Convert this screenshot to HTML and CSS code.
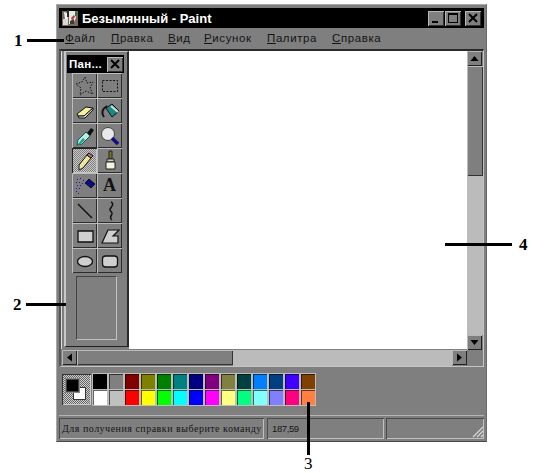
FILE: index.html
```html
<!DOCTYPE html>
<html lang="ru">
<head>
<meta charset="utf-8">
<title>Paint</title>
<link rel="stylesheet" href="styles.css">
</head>
<body>
<div class="stage">
  <div class="window">
    <div class="titlebar">
      <svg class="app-icon" viewBox="0 0 18 18"><path d="M1 2h16v15H1z" fill="#7a6a58"/><path d="M3 3l3 1 1 6H4z" fill="#f4f4f4"/><path d="M8 2h6l1 7-3 6H8z" fill="#e8e8e8"/><path d="M2 10h5v6H2z" fill="#d8d8d8"/><path d="M10 9l3-3 1 2-3 3z" fill="#c03030"/><path d="M9 12l4-2v5H9z" fill="#3a3a3a"/><path d="M6 1h2v7H6z" fill="#2a2a2a"/><path d="M14 3h2v4h-2z" fill="#2a7a3a"/></svg>
      <span class="title-text">Безымянный - Paint</span>
      <div class="caption-btns">
        <button class="cap"><svg viewBox="0 0 16 15"><path d="M4 10h6v2H4z" fill="#000"/></svg></button>
        <button class="cap"><svg viewBox="0 0 16 15"><path d="M3 2h10v10H3zM4 4v7h8V4z" fill="#000" fill-rule="evenodd"/></svg></button>
        <button class="cap cap-close"><svg viewBox="0 0 16 15"><path d="M4 3l8 8M12 3l-8 8" stroke="#000" stroke-width="2"/></svg></button>
      </div>
    </div>
    <nav class="menu">
      <span class="m1"><u>Ф</u>айл</span>
      <span class="m2"><u>П</u>равка</span>
      <span class="m3"><u>В</u>ид</span>
      <span class="m4"><u>Р</u>исунок</span>
      <span class="m5"><u>П</u>алитра</span>
      <span class="m6"><u>С</u>правка</span>
    </nav>
    <div class="client">
      <div class="work">
        <aside class="toolbox">
          <div class="tb-title"><span>Пан...</span><button class="tb-close"><svg viewBox="0 0 16 15"><path d="M4 3l8 8M12 3l-8 8" stroke="#000" stroke-width="2"/></svg></button></div>
          <div class="tools">
            <button class="tool"><svg viewBox="0 0 24 24"><path d="M12 3l2 6 6-1-3 6 3 6-7-3-6 4 1-7-5-4 6-2z" fill="none" stroke="#111" stroke-dasharray="1.5 1.5"/></svg></button>
            <button class="tool"><svg viewBox="0 0 24 24"><path d="M4.500 6.500h15v11h-15z" fill="none" stroke="#111" stroke-dasharray="2 1.500"/></svg></button>
            <button class="tool"><svg viewBox="0 0 24 24"><path d="M4 15l9-7 7 1-9 8H5z" fill="#f4f0a0" stroke="#111"/><path d="M5 17h6l9-8v2l-8 8H6z" fill="#ddd" stroke="#111"/></svg></button>
            <button class="tool"><svg viewBox="0 0 24 24"><path d="M8 9l6-4 7 7-7 6z" fill="#1a8a80" stroke="#111"/><path d="M6 18c-3-4-2-8 3-11" fill="none" stroke="#111" stroke-width="2"/><path d="M13 7l7 6" stroke="#ddd" stroke-width="2"/></svg></button>
            <button class="tool"><svg viewBox="0 0 24 24"><path d="M14 9l4-5 3 2-4 6z" fill="#111"/><path d="M13 8l4 4-8 8-5 1 1-5z" fill="#bfe8e0" stroke="#0a5a50"/><path d="M5 20l5-6 2 2-6 5z" fill="#14a090"/></svg></button>
            <button class="tool"><svg viewBox="0 0 24 24"><circle cx="10" cy="10" r="6.500" fill="#e8e8e8" stroke="#444"/><path d="M14 14l6 6" stroke="#101080" stroke-width="3.500"/></svg></button>
            <button class="tool tool-on"><svg viewBox="0 0 24 24"><path d="M14 6l4 3-8 10-4 2 0-5z" fill="#efe6a0" stroke="#111"/><path d="M14 6l2-2 4 3-2 2z" fill="#d06a80" stroke="#111"/></svg></button>
            <button class="tool"><svg viewBox="0 0 24 24"><path d="M11 2h3v8h-3z" fill="#7a7a20" stroke="#222"/><path d="M9 10h7v3H9z" fill="#ccc" stroke="#222"/><path d="M8 13h9v7H8z" fill="#f4f4e0" stroke="#222"/></svg></button>
            <button class="tool"><svg viewBox="0 0 24 24"><path d="M12 9l4-4 6 5-4 4z" fill="#0a0a90" stroke="#111"/><path d="M4 5h1v1H4zM7 4h1v1H7zM10 6h1v1h-1zM3 8h1v1H3zM6 8h1v1H6zM9 9h1v1H9zM4 11h1v1H4zM7 11h1v1H7zM3 14h1v1H3zM6 14h1v1H6zM3 17h1v1H3zM5 19h1v1H5z" fill="#1818b0"/></svg></button>
            <button class="tool tool-a">A</button>
            <button class="tool"><svg viewBox="0 0 24 24"><path d="M5 5l14 14" stroke="#111" stroke-width="1.500"/></svg></button>
            <button class="tool"><svg viewBox="0 0 24 24"><path d="M13 3c4 2 0 5-1 7s3 3 2 5-3 4 0 6" fill="none" stroke="#111" stroke-width="1.500"/></svg></button>
            <button class="tool"><svg viewBox="0 0 24 24"><path d="M5 7h15v11H5z" fill="#cfcfcf" stroke="#111" stroke-width="1.300"/></svg></button>
            <button class="tool"><svg viewBox="0 0 24 24"><path d="M10 6h11l-6 6h5v7H4z" fill="#cfcfcf" stroke="#111" stroke-width="1.200"/></svg></button>
            <button class="tool"><svg viewBox="0 0 24 24"><ellipse cx="12" cy="12.500" rx="7.500" ry="5" fill="#cfcfcf" stroke="#111" stroke-width="1.300"/></svg></button>
            <button class="tool"><svg viewBox="0 0 24 24"><rect x="4.500" y="7" width="15" height="11" rx="3" fill="#cfcfcf" stroke="#111" stroke-width="1.300"/></svg></button>
          </div>
          <div class="tool-options"></div>
        </aside>
        <main class="canvas"></main>
      </div>
      <div class="vscroll">
        <button class="sb"><svg viewBox="0 0 15 15"><path d="M3.500 10L7.500 5l4 5z" fill="#000"/></svg></button>
        <div class="v-thumb"></div>
        <div class="track"></div>
        <button class="sb"><svg viewBox="0 0 15 15"><path d="M3.500 5l4 5 4-5z" fill="#000"/></svg></button>
      </div>
      <div class="hscroll">
        <button class="sb"><svg viewBox="0 0 15 15"><path d="M10 3.500L5 7.500l5 4z" fill="#000"/></svg></button>
        <div class="h-thumb"></div>
        <div class="track"></div>
        <button class="sb"><svg viewBox="0 0 15 15"><path d="M5 3.500l5 4-5 4z" fill="#000"/></svg></button>
      </div>
      <div class="corner"></div>
    </div>
    <div class="palette">
      <div class="current"><i class="bg-col"></i><i class="fg-col"></i></div>
      <div class="swatches">
        <i style="background:#000"></i><i style="background:#808080"></i><i style="background:#800000"></i><i style="background:#808000"></i><i style="background:#008000"></i><i style="background:#008080"></i><i style="background:#000080"></i><i style="background:#800080"></i><i style="background:#808040"></i><i style="background:#004040"></i><i style="background:#0080ff"></i><i style="background:#004080"></i><i style="background:#4000ff"></i><i style="background:#804000"></i>
        <i style="background:#fff"></i><i style="background:#c0c0c0"></i><i style="background:#ff0000"></i><i style="background:#ffff00"></i><i style="background:#00ff00"></i><i style="background:#00ffff"></i><i style="background:#0000ff"></i><i style="background:#ff00ff"></i><i style="background:#ffff80"></i><i style="background:#00ff80"></i><i style="background:#80ffff"></i><i style="background:#8080ff"></i><i style="background:#ff0080"></i><i style="background:#ff8040"></i>
      </div>
    </div>
    <footer class="status">
      <div class="st st-msg">Для получения справки выберите команду</div>
      <div class="st st-pos">187,59</div>
      <div class="st st-size"><svg class="grip" viewBox="0 0 14 14"><path d="M13 3L3 13M13 7l-6 6M13 11l-2 2" stroke="#d8d8d8" stroke-width="1.200"/></svg></div>
    </footer>
  </div>

  <span class="num n1">1</span><i class="lead l1"></i>
  <span class="num n2">2</span><i class="lead l2"></i>
  <span class="num n3">3</span><i class="lead l3"></i>
  <span class="num n4">4</span><i class="lead l4"></i>
</div>
</body>
</html>
```

FILE: styles.css
```css
* { box-sizing: border-box; }
html, body { margin: 0; padding: 0; background: #fff; }
body { width: 547px; height: 473px; overflow: hidden; font-family: "Liberation Sans", Arial, sans-serif; }
button { margin: 0; padding: 0; border: 0; background: none; display: block; font: inherit; }
svg { display: block; }
i { display: block; }

.stage { position: relative; width: 547px; height: 473px; padding: 4px 0 0 56px; }

.window {
  width: 431px; height: 438px; background: #7f7f7f;
  border: 1px solid #a8a8a8; border-right-color: #6a6a6a; border-bottom-color: #4a4a4a;
  padding: 3px 2px 2px 2px;
  display: flex; flex-direction: column;
}

.titlebar { height: 20px; background: #000; display: flex; align-items: center; padding: 0 3px 0 2px; flex: none; }
.app-icon { width: 18px; height: 18px; flex: none; }
.title-text { color: #fff; font-weight: bold; font-size: 13px; letter-spacing: 0; margin-left: 3px; white-space: nowrap; }
.caption-btns { margin-left: auto; display: flex; gap: 1px; }
.cap { width: 16px; height: 15px; background: #7f7f7f; box-shadow: inset 1px 1px 0 #b8b8b8, inset -1px -1px 0 #333; }
.cap-close { margin-left: 3px; }

.menu { height: 20px; flex: none; position: relative; display: flex; align-items: center; font-size: 11.500px; color: #141414; letter-spacing: .6px; white-space: nowrap; padding-left: 6px; }
.menu .m1 { width: 46px; }
.menu .m2 { width: 57px; }
.menu .m3 { width: 36px; }
.menu .m4 { width: 63px; }
.menu .m5 { width: 65px; }

.client {
  flex: none; height: 318px; margin: 1px 0 0 0;
  display: grid; grid-template-columns: 406px 16px; grid-template-rows: 299px 16px;
  border-top: 2px solid #2a2a2a;
  border-bottom: 1px solid #c4c4c4; border-left: 2px solid #555; border-right: 1px solid #c4c4c4;
}
.work { display: flex; min-width: 0; height: 298px; grid-column: 1; grid-row: 1; padding-left: 2px; border-left: 1px solid #ddd; }

.toolbox {
  width: 65px; height: 296px; flex: none; background: #7f7f7f; padding: 3px 3px 0 1px;
  border: 1px solid #222; border-left: 2px solid #c8c8c8; border-top: 1px solid #c8c8c8; border-right: 2px solid #2a2a2a;
  display: flex; flex-direction: column;
}
.tb-title { height: 18px; background: #000; display: flex; align-items: center; justify-content: space-between; padding: 0 1px 0 2px; flex: none; }
.tb-title span { color: #fff; font-weight: bold; font-size: 11.500px; letter-spacing: .3px; }
.tb-close { width: 16px; height: 15px; background: #7f7f7f; box-shadow: inset 1px 1px 0 #b8b8b8, inset -1px -1px 0 #333; }

.tools { display: grid; grid-template-columns: 25px 25px; grid-auto-rows: 25px; margin: 0 0 0 5px; }
.tool { width: 25px; height: 25px; background: #7f7f7f; box-shadow: inset 1px 1px 0 #bdbdbd, inset -1px -1px 0 #2c2c2c; display: flex; align-items: center; justify-content: center; }
.tool svg { width: 24px; height: 24px; flex: none; }
.tool-on { background: repeating-conic-gradient(#c8c8c8 0 25%, #808080 0 50%) 0 0 / 2px 2px; box-shadow: inset 1px 1px 0 #222, inset -1px -1px 0 #c8c8c8; }
.tool-a { font-family: "Liberation Serif", serif; font-weight: bold; font-size: 18px; color: #111; }
.tool-options { width: 41px; height: 64px; margin: 3px 0 0 9px; border: 1px solid #c0c0c0; border-top-color: #444; border-left-color: #444; }

.canvas { flex: 1; height: 298px; background: #fff; }

.vscroll { grid-column: 2; grid-row: 1; display: flex; flex-direction: column; align-items: stretch; background: #7f7f7f; }
.hscroll { grid-column: 1; grid-row: 2; display: flex; height: 16px; padding-left: 1px; }
.sb { width: 15px; height: 15px; flex: none; background: #7f7f7f; box-shadow: inset 1px 1px 0 #b8b8b8, inset -1px -1px 0 #222; }
.sb svg { width: 15px; height: 15px; }
.track { flex: 1; background: #bbb; }
.vscroll .track { width: 16px; }
.v-thumb { height: 110px; flex: none; background: #7f7f7f; box-shadow: inset 1px 1px 0 #bbb, inset -1px -1px 0 #333; }
.h-thumb { width: 156px; flex: none; background: #7f7f7f; box-shadow: inset 1px 1px 0 #bbb, inset -1px -1px 0 #333; height: 15px; }
.hscroll .track { height: 16px; }
.corner { grid-column: 2; grid-row: 2; background: #7f7f7f; }

.palette { flex: none; height: 49px; padding: 7px 0 0 3px; display: flex; gap: 1px; border-bottom: 1px solid #b4b4b4; }
.current {
  width: 29px; height: 31px; position: relative; flex: none;
  background: repeating-conic-gradient(#cfcfcf 0 25%, #666 0 50%) 0 0 / 2px 2px;
  box-shadow: inset 1px 1px 0 #333, inset -1px -1px 0 #ccc;
}
.bg-col { position: absolute; left: 11px; top: 13px; width: 13px; height: 13px; background: #fff; border: 1px solid #333; }
.fg-col { position: absolute; left: 4px; top: 5px; width: 13px; height: 13px; background: #000; outline: 1px solid #888; border: 1px solid #444; }
.swatches { display: grid; grid-template-columns: repeat(14, 14px); grid-auto-rows: 15px; gap: 1px 2px; margin-left: 1px; }
.swatches i { outline: 1px solid #bdbdbd; box-shadow: inset 1px 1px 0 rgba(0,0,0,.6); }

.status { flex: none; height: 21px; margin-top: 2px; display: flex; gap: 2px; }
.st { height: 21px; box-shadow: inset 1px 1px 0 #4a4a4a, inset -1px -1px 0 #c0c0c0; display: flex; align-items: center; color: #151515; white-space: nowrap; position: relative; }
.st-msg { width: 205px; padding-left: 3px; font-family: "Liberation Serif", serif; font-size: 10px; letter-spacing: .5px; }
.st-pos { width: 117px; margin-left: 1px; padding-left: 5px; font-family: "Liberation Sans", sans-serif; font-size: 9.500px; letter-spacing: -.4px; }
.st-size { flex: 1; }
.grip { position: absolute; right: 0; bottom: 1px; width: 14px; height: 14px; }

.num { position: absolute; font-family: "Liberation Serif", serif; font-size: 17px; font-weight: bold; line-height: 18px; color: #000; }
.n1 { left: 14px; top: 32px; }
.n2 { left: 13px; top: 296px; }
.n3 { left: 304px; top: 455px; font-weight: normal; }
.n4 { left: 519px; top: 236px; }
.lead { position: absolute; background: #000; }
.l1 { left: 27px; top: 39px; width: 37px; height: 3px; }
.l2 { left: 26px; top: 303px; width: 40px; height: 3px; }
.l3 { left: 307px; top: 402px; width: 3px; height: 53px; }
.l4 { left: 445px; top: 243px; width: 67px; height: 3px; }
```
